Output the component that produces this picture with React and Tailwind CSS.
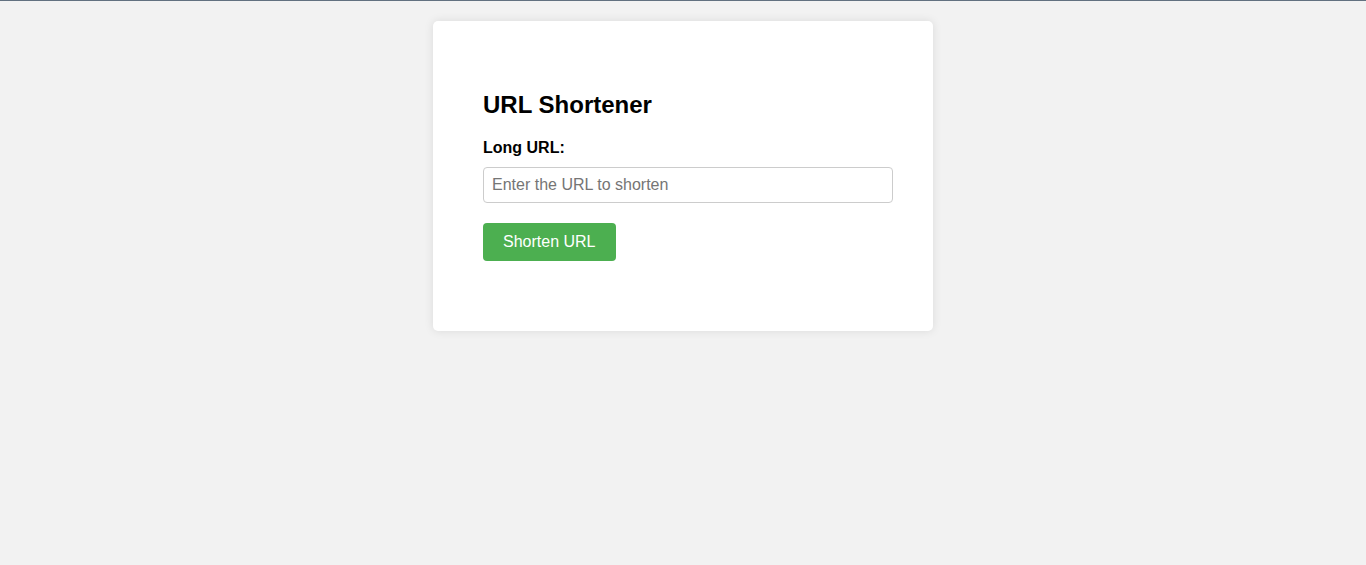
export default function App() {
  return (
    <div
      className="min-h-[565px] bg-[#f2f2f2] border-t border-[#627180] flex justify-center"
      style={{ fontFamily: '"Liberation Sans", Arial, sans-serif' }}
    >
      <div className="mt-5 w-[500px] h-[310px] bg-white rounded-[5px] shadow-[0_0_10px_rgba(0,0,0,0.1)] px-[50px] pt-[70px]">
        <h2 className="text-[24px] font-bold leading-[27.6px] text-black">URL Shortener</h2>
        <label className="block mt-[20px] text-[16px] font-bold leading-[18.4px] text-black">Long URL:</label>
        <input
          type="text"
          placeholder="Enter the URL to shorten"
          className="block mt-[10px] w-[410px] h-[36px] border border-[#cccccc] rounded-[4px] px-[8px] text-[16px] text-black placeholder:text-[#757575] outline-none"
        />
        <button className="mt-[20px] h-[38px] px-[20px] bg-[#4caf50] text-white text-[16px] leading-[18px] rounded-[4px]">
          Shorten URL
        </button>
      </div>
    </div>
  );
}
